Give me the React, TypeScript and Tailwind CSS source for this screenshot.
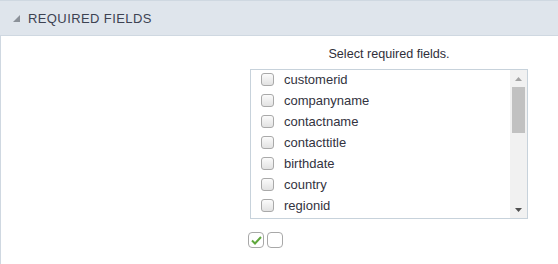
import React from "react";

const FIELDS = [
  "customerid",
  "companyname",
  "contactname",
  "contacttitle",
  "birthdate",
  "country",
  "regionid",
];

const FieldCheckbox = () => (
  <span className="w-[13px] h-[13px] shrink-0 rounded-[3px] border border-[#a9a9a9] bg-gradient-to-b from-[#fbfbfb] to-[#e2e2e2]" />
);

const App = () => {
  return (
    <div className="w-[558px] h-[264px] bg-white font-['Liberation_Sans',Arial,sans-serif] flex flex-col">
      <div className="h-[36px] shrink-0 border-t border-b border-[#cfd8e1] bg-[#dfe5ec] flex items-center pl-[13px] gap-[8px]">
        <svg width="7" height="7" viewBox="0 0 7 7">
          <polygon points="7,0 7,7 0,7" fill="#8b9199" />
        </svg>
        <span className="text-[13px] tracking-[0.4px] text-[#3d4252] leading-none">REQUIRED FIELDS</span>
      </div>

      <div className="flex-1 border-l border-[#cfd8e1] flex flex-col items-start">
        <div className="w-[278px] ml-[249px] mt-[11px] flex flex-col">
          <p className="text-[12.6px] text-[#2f2f3a] text-center leading-[15px]">Select required fields.</p>
          <div className="mt-[7px] h-[150px] border border-[#c7d2db] flex overflow-hidden">
            <ul className="flex-1 flex flex-col -mt-[1px] pl-[10px] overflow-hidden">
              {FIELDS.map(f => (
                <li key={f} className="h-[21px] shrink-0 flex items-center gap-[10px]">
                  <FieldCheckbox />
                  <span className="text-[13px] text-[#333340] leading-none">{f}</span>
                </li>
              ))}
            </ul>
            <div className="w-[17px] shrink-0 bg-[#f1f1f1] flex flex-col items-center">
              <div className="h-[17px] flex items-center justify-center">
                <svg width="7" height="4" viewBox="0 0 7 4">
                  <polygon points="3.5,0 7,4 0,4" fill="#a3a3a3" />
                </svg>
              </div>
              <div className="w-[13px] h-[46px] bg-[#c1c1c1]" />
              <div className="flex-1" />
              <div className="h-[17px] flex items-center justify-center">
                <svg width="7" height="4" viewBox="0 0 7 4">
                  <polygon points="0,0 7,0 3.5,4" fill="#505050" />
                </svg>
              </div>
            </div>
          </div>
          <div className="mt-[13px] -ml-[2px] flex gap-[3px]">
            <span className="w-[16px] h-[16px] rounded-[4px] border border-[#a8a8a8] bg-white flex items-center justify-center">
              <svg width="11" height="9" viewBox="0 0 11 9">
                <path d="M1 4.5 L4 7.5 L10 1" fill="none" stroke="#5fa83c" strokeWidth="2" />
              </svg>
            </span>
            <span className="w-[16px] h-[16px] rounded-[4px] border border-[#a8a8a8] bg-white" />
          </div>
        </div>
      </div>
    </div>
  );
};

export default App;
